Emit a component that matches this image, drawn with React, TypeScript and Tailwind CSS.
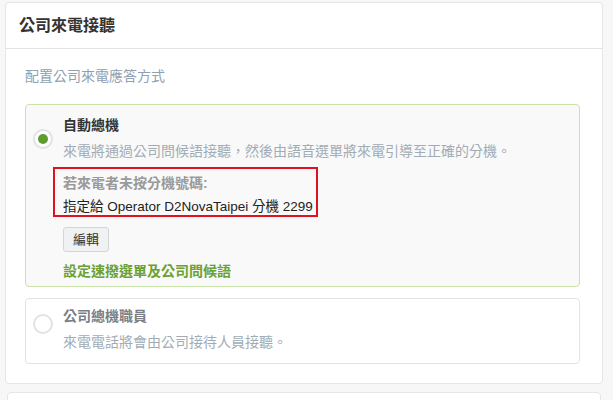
const font = { fontFamily: '"Liberation Sans", "Noto Sans CJK TC", sans-serif' };

function Radio({ checked }: { checked?: boolean }) {
  return (
    <div className="w-5 h-5 rounded-full border-2 border-[#dfe3e6] bg-white flex items-center justify-center shrink-0">
      {checked && <div className="w-[10px] h-[10px] rounded-full bg-[#5e9c2f]" />}
    </div>
  );
}

export default function App() {
  return (
    <div className="min-h-[400px] bg-[#f7f7f7] px-[5px] pt-[2px] overflow-hidden" style={font}>
      <div className="w-[598px] h-[382px] bg-white border border-[#e6e6e6] rounded-[4px]">
        {/* header */}
        <div className="h-[46px] px-[13px] flex items-center border-b border-[#e3e3e3]">
          <h2 className="text-[16px] font-bold text-[#333]">公司來電接聽</h2>
        </div>

        <div className="px-[19px] pt-[17px]">
          <p className="text-[14px] leading-5 text-[#8fa0b0]">配置公司來電應答方式</p>

          {/* option 1 */}
          <div className="mt-[18px] w-[555px] h-[183px] bg-[#f9f9f9] border border-[#c8e2a8] rounded-[4px] flex pl-[7px] pt-[9px]">
            <div className="pt-[15px]">
              <Radio checked />
            </div>
            <div className="ml-[10px] flex flex-col">
              <div className="h-5 leading-5 mt-[1px] text-[14px] font-bold text-[#333]">自動總機</div>
              <div className="mt-[6px] text-[14px] leading-5 text-[#a2acb5]">
                來電將通過公司問候語接聽，然後由語音選單將來電引導至正確的分機。
              </div>
              <div className="mt-[6px] -ml-[10px] w-[265px] h-[50px] border-2 border-[#e3111f] pl-[8px] pt-[4px]">
                <div className="text-[14px] leading-5 font-bold text-[#9a9a9a]">若來電者未按分機號碼:</div>
                <div className="mt-[4px] text-[13.5px] leading-5 text-[#222] whitespace-nowrap">指定給 Operator D2NovaTaipei 分機 2299</div>
              </div>
              <button className="mt-[10px] w-[46px] h-[25px] text-[13px] text-[#333] bg-[#f0f1f2] border border-[#d3d6d9] rounded-[3px]">
                編輯
              </button>
              <div className="mt-[9px] text-[14px] leading-5 font-bold text-[#6aa132]">設定速撥選單及公司問候語</div>
            </div>
          </div>

          {/* option 2 */}
          <div className="mt-[11px] w-[555px] h-[66px] bg-white border border-[#dfe4e9] rounded-[4px] flex pl-[7px] pt-[7px]">
            <div className="pt-[8px]">
              <Radio />
            </div>
            <div className="ml-[10px] flex flex-col">
              <div className="h-5 leading-5 text-[14px] font-bold text-[#7a7f85]">公司總機職員</div>
              <div className="mt-[6px] text-[14px] leading-5 text-[#a2acb5]">來電電話將會由公司接待人員接聽。</div>
            </div>
          </div>
        </div>
      </div>
      <div className="mt-[8px] ml-[2px] w-[594px] h-[20px] bg-white border border-[#e6e6e6] rounded-[4px]" />
    </div>
  );
}
